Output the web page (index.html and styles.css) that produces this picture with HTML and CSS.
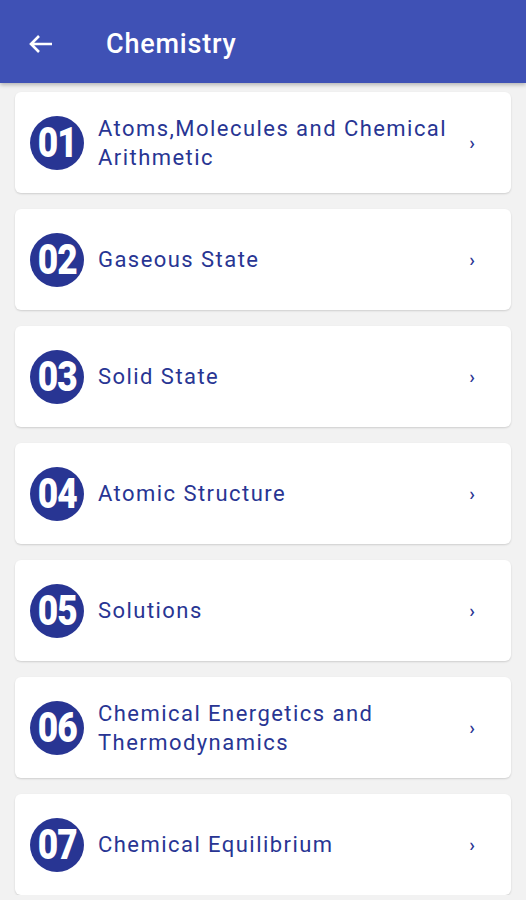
FILE: index.html
```html
<!DOCTYPE html>
<html lang="en">
<head>
    <meta charset="UTF-8">
    <meta name="viewport" content="width=device-width, initial-scale=1.0">
    <title>Chemistry</title>
    <link rel="stylesheet" href="styles.css">
</head>
<body>
    <!-- App bar -->
    <header class="appbar">
        <svg class="back" width="24" height="20" viewBox="0 0 24 20">
            <path d="M23 10H2M10 2L2 10l8 8" fill="none" stroke="#fff" stroke-width="2.6"/>
        </svg>
        <h1>Chemistry</h1>
    </header>

    <!-- Chapters -->
    <div class="list">
        <div class="card">
            <span class="badge"><span>01</span></span>
            <span class="title">Atoms,Molecules and Chemical Arithmetic</span>
            <span class="chev">›</span>
        </div>
        <div class="card">
            <span class="badge"><span>02</span></span>
            <span class="title">Gaseous State</span>
            <span class="chev">›</span>
        </div>
        <div class="card">
            <span class="badge"><span>03</span></span>
            <span class="title">Solid State</span>
            <span class="chev">›</span>
        </div>
        <div class="card">
            <span class="badge"><span>04</span></span>
            <span class="title">Atomic Structure</span>
            <span class="chev">›</span>
        </div>
        <div class="card">
            <span class="badge"><span>05</span></span>
            <span class="title">Solutions</span>
            <span class="chev">›</span>
        </div>
        <div class="card">
            <span class="badge"><span>06</span></span>
            <span class="title">Chemical Energetics and Thermodynamics</span>
            <span class="chev">›</span>
        </div>
        <div class="card">
            <span class="badge"><span>07</span></span>
            <span class="title">Chemical Equilibrium</span>
            <span class="chev">›</span>
        </div>
    </div>
</body>
</html>
```

FILE: styles.css
```css
body {
    margin: 0;
    font-family: Roboto, "Liberation Sans", sans-serif;
    background-color: #f2f2f2;
    overflow: hidden;
}

.appbar {
    height: 83px;
    box-sizing: border-box;
    background-color: #3f51b5;
    display: flex;
    align-items: center;
    padding: 4px 0 0 29px;
    box-shadow: 0 2px 4px rgba(0,0,0,0.25);
    position: relative;
}

.back {
    width: 24px;
    height: 20px;
}

.appbar h1 {
    margin: 0 0 0 53px;
    color: #fff;
    font-size: 27px;
    font-weight: 500;
    letter-spacing: 0.8px;
}

.list {
    display: flex;
    flex-direction: column;
    gap: 16px;
    padding: 9px 15px 0 15px;
}

.card {
    height: 101px;
    background-color: #fff;
    border-radius: 6px;
    box-shadow: 0 1px 2px rgba(0,0,0,0.15);
    display: flex;
    align-items: center;
    padding: 0 36px 0 15px;
}

.badge {
    flex: none;
    width: 54px;
    height: 54px;
    border-radius: 50%;
    background-color: #283593;
    color: #fff;
    font-size: 42px;
    font-weight: 900;
    display: flex;
    align-items: center;
    justify-content: center;
}

.badge span {
    display: block;
    letter-spacing: -1px;
    transform: scaleX(0.84);
}

.title {
    flex: 1;
    margin-left: 14px;
    color: #283593;
    font-size: 22px;
    line-height: 29px;
    letter-spacing: 1.45px;
    padding-right: 16px;
}

.chev {
    color: #283593;
    font-size: 19px;
    font-weight: 500;
}
```
